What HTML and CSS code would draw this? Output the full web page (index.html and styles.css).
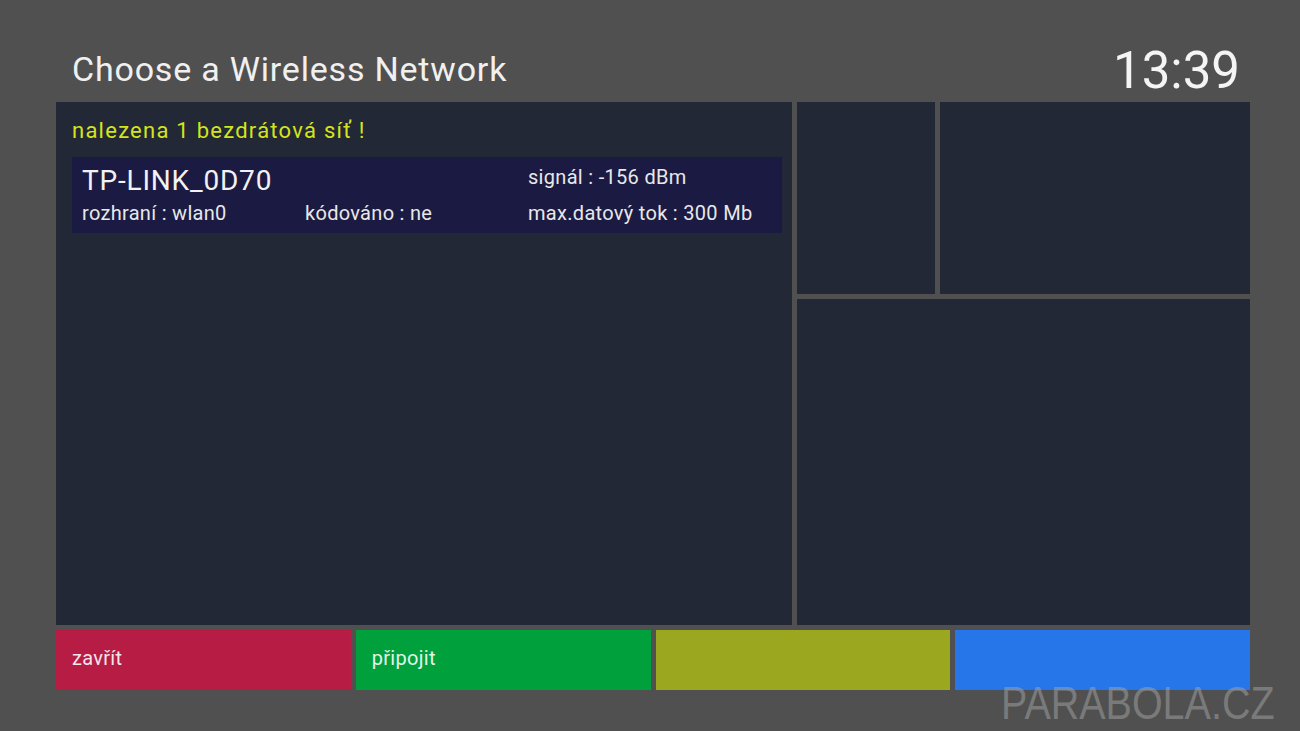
FILE: index.html
```html
<!DOCTYPE html>
<html lang="cs">
<head>
    <meta charset="UTF-8">
    <title>Choose a Wireless Network</title>
    <link rel="stylesheet" href="styles.css">
</head>
<body>
    <div class="screen">
        <header class="top">
            <h1>Choose a Wireless Network</h1>
            <div class="clock">13:39</div>
        </header>

        <div class="panels">
            <section class="list">
                <p class="found">nalezena 1 bezdrátová síť !</p>
                <div class="network">
                    <div class="ssid">TP-LINK_0D70</div>
                    <div class="info signal">signál : -156 dBm</div>
                    <div class="info">rozhraní : wlan0</div>
                    <div class="info">kódováno : ne</div>
                    <div class="info">max.datový tok : 300 Mb</div>
                </div>
            </section>
            <div class="side">
                <div class="side-top">
                    <div class="box box-small"></div>
                    <div class="box box-wide"></div>
                </div>
                <div class="box box-big"></div>
            </div>
        </div>

        <!-- colour keys -->
        <div class="keys">
            <div class="key red">zavřít</div>
            <div class="key green">připojit</div>
            <div class="key yellow"></div>
            <div class="key blue"></div>
        </div>
    </div>
    <div class="watermark">PARABOLA.CZ</div>
</body>
</html>
```

FILE: styles.css
```css
body {
    margin: 0;
    background: #505050;
    font-family: 'Roboto', 'Liberation Sans', sans-serif;
    color: #f2f2f2;
    width: 1300px;
    height: 731px;
    overflow: hidden;
    position: relative;
}
.screen {
    width: 1194px;
    margin-left: 56px;
}

/* Header */
.top {
    height: 102px;
    display: flex;
    justify-content: space-between;
    align-items: flex-end;
    padding: 0 10px 0 16px;
    box-sizing: border-box;
}
h1 {
    margin: 0 0 16px 0;
    font-size: 34px;
    font-weight: normal;
    line-height: 1;
    letter-spacing: 0.8px;
    color: #f0f0f0;
}
.clock {
    font-size: 51px;
    line-height: 1;
    margin-bottom: 6px;
    color: #f4f4f4;
}

/* Main area */
.panels {
    display: flex;
    gap: 5px;
    height: 523px;
}
.list {
    width: 736px;
    background: #222835;
    padding: 16px 10px 0 16px;
    box-sizing: border-box;
}
.found {
    margin: 0 0 13px 0;
    font-size: 22px;
    line-height: 26px;
    letter-spacing: 1.25px;
    color: #d4e41c;
}
.network {
    background: #1b1a42;
    height: 76px;
    padding: 7px 10px 0 10px;
    box-sizing: border-box;
    display: grid;
    grid-template-columns: 223px 223px 1fr;
    grid-template-rows: 34px 30px;
}
.ssid {
    grid-column: 1 / 3;
    font-size: 28px;
    line-height: 34px;
    letter-spacing: 0.8px;
    color: #f2f2f2;
}
.info {
    font-size: 20px;
    line-height: 30px;
    letter-spacing: 0.3px;
    color: #e8e8e8;
}
.signal {
    line-height: 26px;
}

.side {
    flex: 1;
    display: flex;
    flex-direction: column;
    gap: 5px;
}
.side-top {
    display: flex;
    gap: 5px;
    height: 192px;
}
.box {
    background: #222835;
}
.box-small {
    width: 138px;
}
.box-wide {
    flex: 1;
}
.box-big {
    flex: 1;
}

/* Colour keys */
.keys {
    display: grid;
    grid-template-columns: repeat(4, 1fr);
    gap: 5px;
    margin-top: 5px;
    height: 60px;
}
.key {
    padding: 16px 0 0 16px;
    font-size: 20px;
    line-height: 24px;
    letter-spacing: 0.3px;
    color: #f3e6ea;
}
.red { background: #b71c45; }
.green { background: #00a03c; color: #e2f5e6; }
.yellow { background: #9ba71e; }
.blue { background: #2676ea; }

.watermark {
    position: absolute;
    left: 1001px;
    top: 678px;
    font-family: 'Liberation Sans', Arial, sans-serif;
    font-size: 47px;
    line-height: 50px;
    color: rgba(165, 165, 165, 0.5);
    transform: scaleX(0.84);
    transform-origin: left top;
    white-space: nowrap;
}
```
